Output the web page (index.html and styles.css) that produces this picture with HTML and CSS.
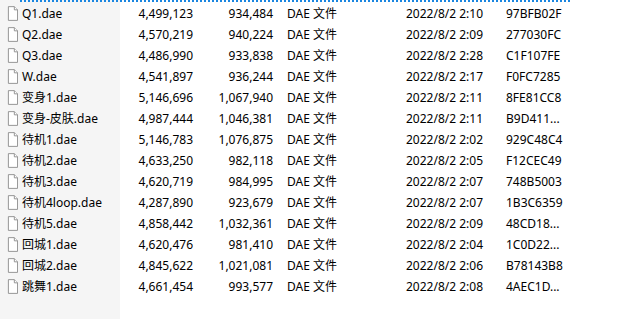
FILE: index.html
```html
<!DOCTYPE html>
<html lang="zh-CN">
<head>
<meta charset="utf-8">
<title>文件列表</title>
<link rel="stylesheet" href="styles.css">
</head>
<body>
<div class="view">
  <div class="focus-edge"></div>
  <div class="rows" id="rows">
    <div class="row"><div class="name"><svg class="ico" viewBox="0 0 12 16"><path d="M1.5 0.5H8L11.5 4V15.5H1.5Z"/><path d="M8 0.5V4H11.5"/></svg><span>Q1.dae</span></div><div class="num">4,499,123</div><div class="num2">934,484</div><div class="type">DAE 文件</div><div class="date">2022/8/2 2:10</div><div class="hash">97BFB02F</div></div>
    <div class="row"><div class="name"><svg class="ico" viewBox="0 0 12 16"><path d="M1.5 0.5H8L11.5 4V15.5H1.5Z"/><path d="M8 0.5V4H11.5"/></svg><span>Q2.dae</span></div><div class="num">4,570,219</div><div class="num2">940,224</div><div class="type">DAE 文件</div><div class="date">2022/8/2 2:09</div><div class="hash">277030FC</div></div>
    <div class="row"><div class="name"><svg class="ico" viewBox="0 0 12 16"><path d="M1.5 0.5H8L11.5 4V15.5H1.5Z"/><path d="M8 0.5V4H11.5"/></svg><span>Q3.dae</span></div><div class="num">4,486,990</div><div class="num2">933,838</div><div class="type">DAE 文件</div><div class="date">2022/8/2 2:28</div><div class="hash">C1F107FE</div></div>
    <div class="row"><div class="name"><svg class="ico" viewBox="0 0 12 16"><path d="M1.5 0.5H8L11.5 4V15.5H1.5Z"/><path d="M8 0.5V4H11.5"/></svg><span>W.dae</span></div><div class="num">4,541,897</div><div class="num2">936,244</div><div class="type">DAE 文件</div><div class="date">2022/8/2 2:17</div><div class="hash">F0FC7285</div></div>
    <div class="row"><div class="name"><svg class="ico" viewBox="0 0 12 16"><path d="M1.5 0.5H8L11.5 4V15.5H1.5Z"/><path d="M8 0.5V4H11.5"/></svg><span>变身1.dae</span></div><div class="num">5,146,696</div><div class="num2">1,067,940</div><div class="type">DAE 文件</div><div class="date">2022/8/2 2:11</div><div class="hash">8FE81CC8</div></div>
    <div class="row"><div class="name"><svg class="ico" viewBox="0 0 12 16"><path d="M1.5 0.5H8L11.5 4V15.5H1.5Z"/><path d="M8 0.5V4H11.5"/></svg><span>变身-皮肤.dae</span></div><div class="num">4,987,444</div><div class="num2">1,046,381</div><div class="type">DAE 文件</div><div class="date">2022/8/2 2:11</div><div class="hash">B9D411...</div></div>
    <div class="row"><div class="name"><svg class="ico" viewBox="0 0 12 16"><path d="M1.5 0.5H8L11.5 4V15.5H1.5Z"/><path d="M8 0.5V4H11.5"/></svg><span>待机1.dae</span></div><div class="num">5,146,783</div><div class="num2">1,076,875</div><div class="type">DAE 文件</div><div class="date">2022/8/2 2:02</div><div class="hash">929C48C4</div></div>
    <div class="row"><div class="name"><svg class="ico" viewBox="0 0 12 16"><path d="M1.5 0.5H8L11.5 4V15.5H1.5Z"/><path d="M8 0.5V4H11.5"/></svg><span>待机2.dae</span></div><div class="num">4,633,250</div><div class="num2">982,118</div><div class="type">DAE 文件</div><div class="date">2022/8/2 2:05</div><div class="hash">F12CEC49</div></div>
    <div class="row"><div class="name"><svg class="ico" viewBox="0 0 12 16"><path d="M1.5 0.5H8L11.5 4V15.5H1.5Z"/><path d="M8 0.5V4H11.5"/></svg><span>待机3.dae</span></div><div class="num">4,620,719</div><div class="num2">984,995</div><div class="type">DAE 文件</div><div class="date">2022/8/2 2:07</div><div class="hash">748B5003</div></div>
    <div class="row"><div class="name"><svg class="ico" viewBox="0 0 12 16"><path d="M1.5 0.5H8L11.5 4V15.5H1.5Z"/><path d="M8 0.5V4H11.5"/></svg><span>待机4loop.dae</span></div><div class="num">4,287,890</div><div class="num2">923,679</div><div class="type">DAE 文件</div><div class="date">2022/8/2 2:07</div><div class="hash">1B3C6359</div></div>
    <div class="row"><div class="name"><svg class="ico" viewBox="0 0 12 16"><path d="M1.5 0.5H8L11.5 4V15.5H1.5Z"/><path d="M8 0.5V4H11.5"/></svg><span>待机5.dae</span></div><div class="num">4,858,442</div><div class="num2">1,032,361</div><div class="type">DAE 文件</div><div class="date">2022/8/2 2:09</div><div class="hash">48CD18...</div></div>
    <div class="row"><div class="name"><svg class="ico" viewBox="0 0 12 16"><path d="M1.5 0.5H8L11.5 4V15.5H1.5Z"/><path d="M8 0.5V4H11.5"/></svg><span>回城1.dae</span></div><div class="num">4,620,476</div><div class="num2">981,410</div><div class="type">DAE 文件</div><div class="date">2022/8/2 2:04</div><div class="hash">1C0D22...</div></div>
    <div class="row"><div class="name"><svg class="ico" viewBox="0 0 12 16"><path d="M1.5 0.5H8L11.5 4V15.5H1.5Z"/><path d="M8 0.5V4H11.5"/></svg><span>回城2.dae</span></div><div class="num">4,845,622</div><div class="num2">1,021,081</div><div class="type">DAE 文件</div><div class="date">2022/8/2 2:06</div><div class="hash">B78143B8</div></div>
    <div class="row"><div class="name"><svg class="ico" viewBox="0 0 12 16"><path d="M1.5 0.5H8L11.5 4V15.5H1.5Z"/><path d="M8 0.5V4H11.5"/></svg><span>跳舞1.dae</span></div><div class="num">4,661,454</div><div class="num2">993,577</div><div class="type">DAE 文件</div><div class="date">2022/8/2 2:08</div><div class="hash">4AEC1D...</div></div>
  </div>
</div>
</body>
</html>
```
FILE: styles.css
```css
html, body {
  margin: 0;
  padding: 0;
  background: #ffffff;
}

.view {
  width: 641px;
  height: 319px;
  overflow: hidden;
  background: linear-gradient(to right, #f5f5f5 0, #f5f5f5 120px, #ffffff 120px);
  font-family: "Noto Sans", "Noto Sans CJK SC", sans-serif;
  font-size: 12px;
  color: #000;
}

.focus-edge {
  margin-left: 20px;
  width: 550px;
  height: 0;
  border-top: 2px dotted #1a86e0;
}

.rows {
  padding-top: 1px;
}

.row {
  display: grid;
  grid-template-columns: 120px 73px 80px 119px 100px 80px;
  height: 21px;
  line-height: 21px;
  white-space: nowrap;
}

.name {
  display: flex;
  align-items: center;
  gap: 4px;
  padding-left: 7px;
}

.ico {
  width: 11px;
  height: 15px;
  flex: none;
  fill: #ffffff;
  stroke: #8c8c8c;
  stroke-width: 1;
}

.num, .num2 {
  text-align: right;
}

.type, .date, .hash {
  padding-left: 14px;
}
```
